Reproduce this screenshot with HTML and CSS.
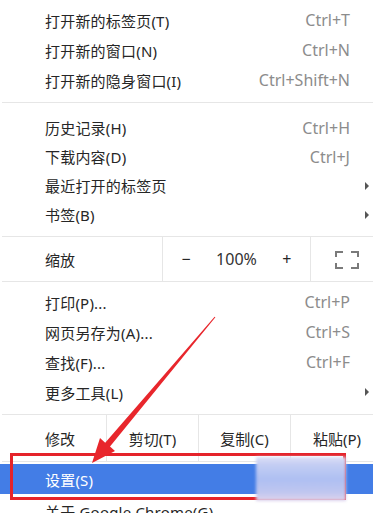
FILE: index.html
```html
<!DOCTYPE html>
<html lang="zh-CN">
<head>
<meta charset="utf-8">
<title>Chrome 菜单</title>
<link rel="stylesheet" href="styles.css">
</head>
<body>
<div class="menu">
  <div class="group g1">
    <div class="item"><span class="label">打开新的标签页(T)</span><span class="key">Ctrl+T</span></div>
    <div class="item"><span class="label">打开新的窗口(N)</span><span class="key">Ctrl+N</span></div>
    <div class="item"><span class="label">打开新的隐身窗口(I)</span><span class="key">Ctrl+Shift+N</span></div>
  </div>
  <div class="sep"></div>
  <div class="group g2">
    <div class="item"><span class="label">历史记录(H)</span><span class="key">Ctrl+H</span></div>
    <div class="item"><span class="label">下载内容(D)</span><span class="key">Ctrl+J</span></div>
    <div class="item"><span class="label">最近打开的标签页</span><span class="sub"></span></div>
    <div class="item"><span class="label">书签(B)</span><span class="sub"></span></div>
  </div>
  <div class="sep"></div>
  <div class="zoom-row">
    <div class="cell label-cell">缩放</div>
    <div class="cell zoom-ctrl"><span class="zbtn">−</span><span class="zval">100%</span><span class="zbtn">+</span></div>
    <div class="cell fs">
      <svg width="24" height="18" viewBox="0 0 24 18" aria-hidden="true">
        <path d="M1 6 V1 H8 M16 1 H23 V6 M23 12 V17 H16 M8 17 H1 V12" fill="none" stroke="#7a7a7a" stroke-width="2"/>
      </svg>
    </div>
  </div>
  <div class="sep"></div>
  <div class="group g3">
    <div class="item"><span class="label">打印(P)...</span><span class="key">Ctrl+P</span></div>
    <div class="item"><span class="label">网页另存为(A)...</span><span class="key">Ctrl+S</span></div>
    <div class="item"><span class="label">查找(F)...</span><span class="key">Ctrl+F</span></div>
    <div class="item"><span class="label">更多工具(L)</span><span class="sub"></span></div>
  </div>
  <div class="sep"></div>
  <div class="edit-row">
    <div class="cell label-cell">修改</div>
    <div class="cell ecell">剪切(T)</div>
    <div class="cell ecell">复制(C)</div>
    <div class="cell ecell">粘贴(P)</div>
  </div>
  <div class="sep"></div>
  <div class="item selected"><span class="label">设置(S)</span></div>
  <div class="item after"><span class="label">关于 Google Chrome(G)</span></div>
</div>

<div class="redbox"></div>
<div class="blurpatch"></div>
<svg class="arrow" width="373" height="513" viewBox="0 0 373 513" aria-hidden="true">
  <polygon points="92,463 115,451 110,446.6 215.4,317.3 214.6,316.7 105.2,442.8 100,438" fill="#e8262c"/>
</svg>
</body>
</html>
```

FILE: styles.css
```css
html, body {
  margin: 0;
  padding: 0;
  background: #ffffff;
  overflow: hidden;
}

body {
  width: 373px;
  height: 513px;
  position: relative;
  font-family: "Noto Sans", "Noto Sans CJK SC", sans-serif;
  font-size: 15px;
  color: #262626;
}

.menu {
  width: 383px;
}

.group {
  display: flex;
  flex-direction: column;
}

.g1 { padding: 5px 0 7px; }
.g2 { padding: 10px 0 7px; }
.g2 .item { height: 29px; }
.g3 { padding: 5px 0 7px; }

.item {
  height: 30px;
  display: flex;
  align-items: center;
  justify-content: space-between;
  padding: 0 33px 0 45px;
  box-sizing: border-box;
}

.label {
  white-space: nowrap;
  letter-spacing: 0.2px;
}

.key {
  font-size: 16px;
  color: #8c8c8c;
  white-space: nowrap;
}

.sub {
  width: 0;
  height: 0;
  border-top: 4px solid transparent;
  border-bottom: 4px solid transparent;
  border-left: 4px solid #555555;
  margin-right: -19px;
}

.sep {
  height: 1px;
  background: #e6e6e6;
  margin-left: 2px;
}

.zoom-row {
  height: 44px;
  display: flex;
}

.cell {
  display: flex;
  align-items: center;
  box-sizing: border-box;
}

.label-cell {
  padding-left: 45px;
}

.zoom-row .label-cell {
  width: 163px;
  border-right: 1px solid #e6e6e6;
}

.zoom-ctrl {
  width: 148px;
  border-right: 1px solid #e6e6e6;
  justify-content: center;
  gap: 25px;
  font-size: 16px;
}

.zbtn {
  font-size: 16px;
  color: #262626;
  width: 10px;
  text-align: center;
}

.zval {
  color: #333;
}

.fs {
  flex: 1;
  justify-content: center;
  padding-top: 1px;
}

.edit-row {
  height: 46px;
  display: flex;
}

.edit-row .label-cell {
  width: 107px;
  border-right: 1px solid #e6e6e6;
}

.ecell {
  width: 92px;
  justify-content: center;
  border-right: 1px solid #e6e6e6;
}

.ecell:last-child {
  border-right: none;
}

.selected {
  margin-top: 2px;
  background: #437de6;
  color: #ffffff;
}

.after {
  padding-top: 4px;
}

.redbox {
  position: absolute;
  left: 10px;
  top: 453px;
  width: 336px;
  height: 47px;
  box-sizing: border-box;
  border: 3px solid #e5232a;
}

.blurpatch {
  position: absolute;
  left: 256px;
  top: 457px;
  width: 90px;
  height: 44px;
  background: linear-gradient(180deg, #dcdef6 0%, #c3cdf3 18%, #aebff2 50%, #bfc6ef 80%, #e0d3ec 100%);
  filter: blur(1.5px);
}

.arrow {
  position: absolute;
  left: 0;
  top: 0;
  pointer-events: none;
}
```
